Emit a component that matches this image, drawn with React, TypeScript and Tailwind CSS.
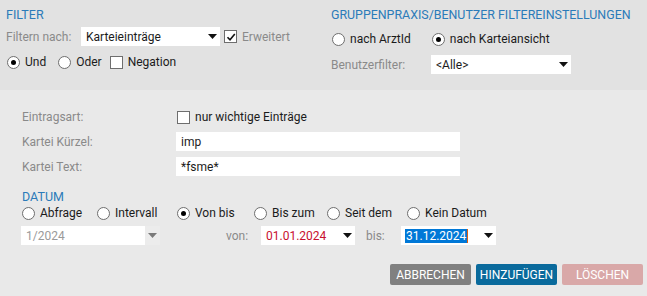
import React from 'react'

const Radio = ({ checked, label }: { checked?: boolean; label: string }) => (
  <label className="flex items-center gap-[5px] text-[#1b1b1b]">
    <span className="flex h-[13px] w-[13px] items-center justify-center rounded-full border border-[#6e6e6e] bg-white">
      {checked && <span className="h-[5px] w-[5px] rounded-full bg-black" />}
    </span>
    <span>{label}</span>
  </label>
)

const Check = ({ checked, label, muted }: { checked?: boolean; label: string; muted?: boolean }) => (
  <label className={`flex items-center gap-[5px] ${muted ? 'text-[#8a8a8a]' : 'text-[#1b1b1b]'}`}>
    <span className="flex h-[13px] w-[13px] items-center justify-center border border-[#6e6e6e] bg-white">
      {checked && (
        <svg width="10" height="10" viewBox="0 0 10 10">
          <path d="M1.5 5.2 L4 7.8 L8.8 2" fill="none" stroke="#111" strokeWidth="1.6" />
        </svg>
      )}
    </span>
    <span>{label}</span>
  </label>
)

const Arrow = ({ color = '#111' }: { color?: string }) => (
  <svg width="9" height="5" viewBox="0 0 9 5">
    <path d="M0 0 L9 0 L4.5 5 Z" fill={color} />
  </svg>
)

const Select = ({ value, className }: { value: string; className: string }) => (
  <div className={`flex h-[19px] items-center justify-between bg-white pl-[5px] pr-[3px] text-[#1b1b1b] ${className}`}>
    <span>{value}</span>
    <Arrow />
  </div>
)

export default function App() {
  return (
    <div
      className="flex h-[296px] w-[647px] flex-col text-[12px] leading-[14px]"
      style={{ fontFamily: 'Roboto, "Liberation Sans", sans-serif' }}
    >
      {/* oberer Bereich */}
      <div className="flex h-[90px] bg-[#e2e2e2] pl-[6px] pt-[8px]">
        <div className="w-[325px]">
          <div className="text-[12.5px] text-[#2b7bb9]">FILTER</div>
          <div className="mt-[5px] flex items-center">
            <span className="w-[75px] text-[#8a8a8a]">Filtern nach:</span>
            <Select value="Karteieinträge" className="w-[139px]" />
            <div className="ml-[4px]">
              <Check checked label="Erweitert" muted />
            </div>
          </div>
          <div className="mt-[9px] flex items-center pl-[1px]">
            <Radio checked label="Und" />
            <div className="ml-[12px]"><Radio label="Oder" /></div>
            <div className="ml-[8px]"><Check label="Negation" /></div>
          </div>
        </div>
        <div className="flex-1">
          <div className="text-[12.4px] text-[#2b7bb9]">GRUPPENPRAXIS/BENUTZER FILTEREINSTELLUNGEN</div>
          <div className="mt-[10px] flex items-center gap-[21px] pl-[1px]">
            <Radio label="nach ArztId" />
            <Radio checked label="nach Karteiansicht" />
          </div>
          <div className="mt-[9px] flex items-center">
            <span className="w-[100px] text-[#8a8a8a]">Benutzerfilter:</span>
            <Select value="<Alle>" className="w-[140px]" />
          </div>
        </div>
      </div>

      {/* unterer Bereich */}
      <div className="flex flex-1 flex-col bg-[#e9e9e9] pl-[22px] pt-[19px]">
        <div className="flex h-[16px] items-center">
          <span className="w-[155px] text-[#8a8a8a]">Eintragsart:</span>
          <Check label="nur wichtige Einträge" />
        </div>
        <div className="mt-[7px] flex items-center">
          <span className="w-[154px] text-[#8a8a8a]">Kartei Kürzel:</span>
          <div className="flex h-[19px] w-[284px] items-center bg-white pl-[5px] text-[#1b1b1b]">imp</div>
        </div>
        <div className="mt-[6px] flex items-center">
          <span className="w-[154px] text-[#8a8a8a]">Kartei Text:</span>
          <div className="flex h-[19px] w-[284px] items-center bg-white pl-[5px] text-[#1b1b1b]">*fsme*</div>
        </div>
        <div className="mt-[14px] text-[12.5px] text-[#2b7bb9]">DATUM</div>
        <div className="mt-[2px] flex items-center">
          <div className="w-[75px]"><Radio label="Abfrage" /></div>
          <div className="w-[80px]"><Radio label="Intervall" /></div>
          <div className="w-[77px]"><Radio checked label="Von bis" /></div>
          <div className="w-[73px]"><Radio label="Bis zum" /></div>
          <div className="w-[80px]"><Radio label="Seit dem" /></div>
          <Radio label="Kein Datum" />
        </div>
        <div className="mt-[6px] flex items-center">
          <div className="flex h-[19px] w-[139px] -ml-[1px] items-center">
            <div className="flex h-full flex-1 items-center bg-white pl-[5px] text-[#9a9a9a]">1/2024</div>
            <div className="flex h-full w-[15px] items-center justify-center bg-[#ececec]">
              <Arrow color="#7a7a7a" />
            </div>
          </div>
          <span className="ml-[66px] w-[35px] text-[#8a8a8a]">von:</span>
          <div className="flex h-[19px] w-[94px] items-center justify-between bg-white pl-[5px] pr-[3px] text-[#c8102e]">
            <span>01.01.2024</span>
            <Arrow />
          </div>
          <span className="ml-[11px] w-[35px] text-[#8a8a8a]">bis:</span>
          <div className="flex h-[19px] w-[95px] items-center justify-between bg-white pl-[4px] pr-[3px] text-[#1b1b1b]">
            <span className="border-r border-[#e06010] bg-[#0078d7] px-[1px] text-white">31.12.2024</span>
            <Arrow />
          </div>
        </div>
        <div className="mt-[19px] flex justify-end gap-[5px] pr-[4px]">
          <button className="h-[21px] w-[81px] rounded-[2px] bg-[#808080] text-[12px] text-white">ABBRECHEN</button>
          <button className="h-[21px] w-[81px] rounded-[2px] bg-[#0a6a9c] text-[12px] text-white">HINZUFÜGEN</button>
          <button className="h-[21px] w-[81px] rounded-[2px] bg-[#d9a8a8] text-[12px] text-white">LÖSCHEN</button>
        </div>
      </div>
    </div>
  )
}
